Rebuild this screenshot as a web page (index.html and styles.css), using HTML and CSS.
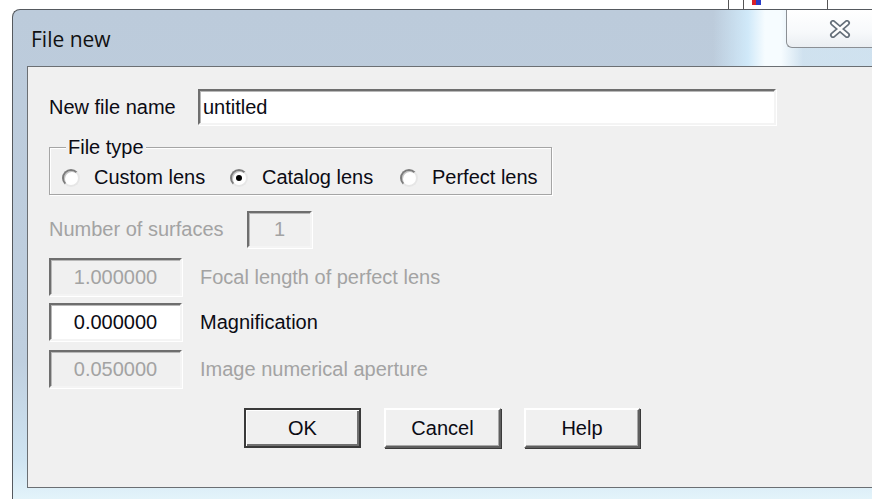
FILE: index.html
```html
<!DOCTYPE html>
<html lang="en">
<head>
<meta charset="utf-8">
<title>File new</title>
<link rel="stylesheet" href="styles.css">
</head>
<body>
<div class="topstrip">
  <span class="strip-fill"></span>
  <span class="strip-tick"></span>
  <span class="strip-tick strip-tick-near"></span>
  <span class="strip-mark"></span>
  <span class="strip-tick strip-tick-far"></span>
</div>
<div class="window">
  <div class="titlebar">
    <div class="title">File new</div>
    <button class="close" type="button" aria-label="Close">
      <svg width="22" height="18" viewBox="0 0 22 18">
        <path d="M4 3 L18 15 M18 3 L4 15" stroke="#66707a" stroke-width="6" stroke-linecap="round" fill="none"/>
        <path d="M4 3 L18 15 M18 3 L4 15" stroke="#ffffff" stroke-width="2.6" stroke-linecap="round" fill="none"/>
      </svg>
    </button>
  </div>
  <div class="client">
    <div class="row row-name">
      <label class="lbl lbl-name" for="fname">New file name</label>
      <div class="edit edit-name" id="fname">untitled</div>
    </div>

    <div class="group">
      <div class="legend">File type</div>
      <div class="radios">
        <div class="radio-item item-custom"><span class="radio"></span><span class="lbl">Custom lens</span></div>
        <div class="radio-item item-catalog"><span class="radio checked"></span><span class="lbl">Catalog lens</span></div>
        <div class="radio-item"><span class="radio"></span><span class="lbl">Perfect lens</span></div>
      </div>
    </div>

    <div class="row row-surfaces">
      <span class="lbl disabled lbl-surfaces">Number of surfaces</span>
      <div class="edit num num-small is-disabled">1</div>
    </div>

    <div class="row row-field row-focal">
      <div class="edit num is-disabled">1.000000</div>
      <span class="lbl disabled">Focal length of perfect lens</span>
    </div>

    <div class="row row-field row-mag">
      <div class="edit num">0.000000</div>
      <span class="lbl">Magnification</span>
    </div>

    <div class="row row-field row-na">
      <div class="edit num is-disabled">0.050000</div>
      <span class="lbl disabled">Image numerical aperture</span>
    </div>

    <div class="buttons">
      <button class="btn btn-default" type="button">OK</button>
      <button class="btn" type="button">Cancel</button>
      <button class="btn btn-help" type="button">Help</button>
    </div>
  </div>
  <div class="frame-bottom"></div>
</div>
</body>
</html>
```

FILE: styles.css
```css
html, body {
  margin: 0;
  padding: 0;
  width: 872px;
  height: 499px;
  overflow: hidden;
  background: #ffffff;
}

body {
  font-family: "Liberation Sans", Arial, sans-serif;
}

/* strip of the desktop above the dialog */
.topstrip {
  height: 9px;
  display: flex;
  align-items: stretch;
}
.strip-fill { width: 728px; }
.strip-tick {
  width: 1px;
  background: #555;
}
.strip-tick-near { margin-left: 14px; }
.strip-mark {
  width: 9px;
  height: 5px;
  margin-left: 8px;
  background: linear-gradient(to right, #d8202a 0, #d8202a 45%, #2a3cc8 45%, #2a3cc8 100%);
}
.strip-tick-far { margin-left: 66px; }

/* dialog window */
.window {
  margin-left: 12px;
  width: 880px;
  height: 500px;
  border-top: 1px solid #55595e;
  border-left: 1px solid #55595e;
  border-top-left-radius: 8px;
  background: linear-gradient(to bottom, #bccbdb 0, #bfcfdf 70%, #cfe4f2 90%, #e8f7fc 100%);
  box-sizing: border-box;
  display: flex;
  flex-direction: column;
}

.titlebar {
  height: 56px;
  display: flex;
  align-items: flex-start;
  background: linear-gradient(to right, rgba(255,255,255,0) 0, rgba(255,255,255,0) 700px, rgba(210,236,252,0.9) 735px, rgba(246,252,255,1) 752px, rgba(246,252,255,1) 768px, rgba(220,240,252,0.6) 790px);
}
.title {
  font-family: "Segoe UI", "Open Sans", "Noto Sans", sans-serif;
  font-size: 21px;
  color: #111;
  padding-left: 18px;
  margin-top: 15px;
  line-height: 28px;
  flex: 1;
}

.close {
  width: 106px;
  height: 38px;
  margin: 0;
  border: 1px solid #8b8f94;
  border-top: none;
  border-right: none;
  border-bottom-left-radius: 6px;
  background: linear-gradient(to bottom, #ffffff 0, #f7f9fb 60%, #eaeef2 100%);
  display: flex;
  align-items: center;
  justify-content: flex-start;
  padding: 0 0 0 42px;
  box-sizing: border-box;
}
.close svg { display: block; }

/* dialog client area */
.client {
  margin-left: 14px;
  height: 422px;
  background: #f0f0f0;
  border-top: 1px solid #6b6f73;
  border-left: 1px solid #6b6f73;
  border-bottom: 1px solid #6b6f73;
  box-sizing: border-box;
  padding-left: 21px;
  padding-top: 22px;
  display: flex;
  flex-direction: column;
  color: #000;
  font-size: 20px;
}
.frame-bottom { flex: 1; }

.row {
  display: flex;
  align-items: center;
}

.lbl {
  white-space: nowrap;
  color: #0b0b14;
}
.lbl.disabled { color: #a3a3a3; }

.lbl-name { width: 149px; }
.lbl-surfaces { width: 198px; }

/* sunken edit fields */
.edit {
  box-sizing: border-box;
  background: #ffffff;
  border-style: solid;
  border-width: 2px;
  border-color: #6e6e6e #f4f4f4 #f4f4f4 #6e6e6e;
  box-shadow: 1px 1px 0 #ffffff, inset 1px 1px 0 #b8b8b8;
  display: flex;
  align-items: center;
  color: #0b0b14;
}
.edit-name {
  width: 578px;
  height: 36px;
  padding-left: 3px;
}
.num {
  width: 133px;
  height: 38px;
  justify-content: center;
}
.num-small { width: 65px; height: 37px; }
.edit.is-disabled {
  background: #f0f0f0;
  color: #a3a3a3;
}

/* radio group */
.group {
  margin-top: 22px;
  width: 503px;
  height: 48px;
  box-sizing: border-box;
  border: 1px solid #a5a5a5;
  box-shadow: inset 1px 1px 0 #ffffff, 1px 1px 0 #ffffff;
  padding-left: 12px;
}
.legend {
  width: fit-content;
  margin-top: -12px;
  margin-left: 4px;
  padding: 0 2px;
  background: #f0f0f0;
  line-height: 22px;
  color: #0b0b14;
}
.radios {
  display: flex;
  align-items: center;
  margin-top: 8px;
}
.radio-item {
  display: flex;
  align-items: center;
  gap: 14px;
}
.item-custom { width: 168px; }
.item-catalog { width: 170px; }

.radio {
  width: 18px;
  height: 18px;
  box-sizing: border-box;
  border-radius: 50%;
  border: 2px solid;
  border-color: #7b7b7b #e6e6e6 #e6e6e6 #7b7b7b;
  background: #ffffff;
  box-shadow: inset 1px 1px 0 #c4c4c4;
  display: flex;
  align-items: center;
  justify-content: center;
}
.radio.checked::after {
  content: "";
  width: 6px;
  height: 6px;
  border-radius: 50%;
  background: #000;
}

.row-surfaces { margin-top: 16px; }
.row-field { gap: 18px; }
.row-focal { margin-top: 10px; }
.row-mag { margin-top: 7px; }
.row-na { margin-top: 9px; }

/* push buttons */
.buttons {
  margin-top: 20px;
  display: flex;
  gap: 23px;
  padding-left: 195px;
}
.btn {
  width: 117px;
  height: 40px;
  box-sizing: border-box;
  font-family: "Liberation Sans", Arial, sans-serif;
  font-size: 20px;
  color: #0b0b14;
  background: #f0f0f0;
  border-style: solid;
  border-width: 2px;
  border-color: #ffffff #5f5f5f #5f5f5f #ffffff;
  box-shadow: inset -1px -1px 0 #a8a8a8, 1px 1px 0 #3a3a3a;
  padding: 0;
}
.btn-default {
  border-color: #3a3a3a;
  box-shadow: inset 1px 1px 0 #ffffff, inset -2px -2px 0 #707070;
}
.btn-help { width: 116px; }
```
